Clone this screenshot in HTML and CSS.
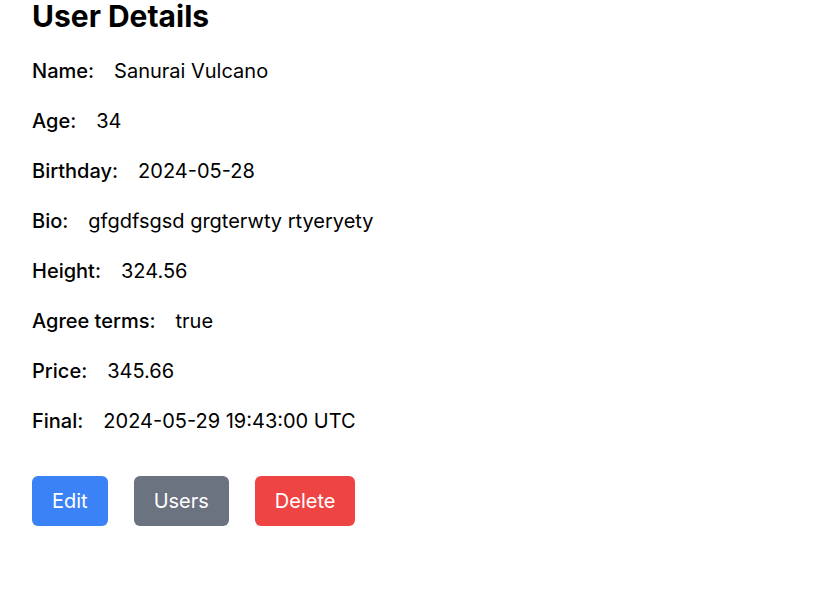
FILE: index.html
```html
<!DOCTYPE html>
<html>
<head>
<meta charset="utf-8">
<link rel="stylesheet" href="styles.css">
</head>
<body>
<div class="page">
  <h1 class="title">User Details</h1>
  <div class="rows">
    <div class="row"><span class="label">Name:</span><span class="value">Sanurai Vulcano</span></div>
    <div class="row"><span class="label">Age:</span><span class="value">34</span></div>
    <div class="row"><span class="label">Birthday:</span><span class="value">2024-05-28</span></div>
    <div class="row"><span class="label">Bio:</span><span class="value">gfgdfsgsd grgterwty rtyeryety</span></div>
    <div class="row"><span class="label">Height:</span><span class="value">324.56</span></div>
    <div class="row"><span class="label">Agree terms:</span><span class="value">true</span></div>
    <div class="row"><span class="label">Price:</span><span class="value">345.66</span></div>
    <div class="row"><span class="label">Final:</span><span class="value">2024-05-29 19:43:00 UTC</span></div>
  </div>
  <div class="actions">
    <button class="btn btn-blue">Edit</button>
    <button class="btn btn-gray">Users</button>
    <button class="btn btn-red">Delete</button>
  </div>
</div>
</body>
</html>
```
FILE: styles.css
```css
html, body {
  margin: 0;
  padding: 0;
  background: #ffffff;
}
body {
  font-family: Inter, "Noto Sans", sans-serif;
  color: #000000;
}
.page {
  padding: 0 32px;
}
.title {
  margin: 0;
  font-size: 30px;
  line-height: 32px;
  font-weight: 700;
}
.rows {
  display: flex;
  flex-direction: column;
  gap: 22px;
  margin-top: 25px;
}
.row {
  font-size: 20px;
  line-height: 28px;
  display: flex;
  gap: 20px;
}
.label {
  font-weight: 500;
}
.value {
  font-weight: 400;
}
.actions {
  display: flex;
  gap: 26px;
  margin-top: 41px;
}
.btn {
  font-family: Inter, "Noto Sans", sans-serif;
  font-size: 20px;
  line-height: 28px;
  font-weight: 400;
  color: #ffffff;
  border: none;
  border-radius: 6px;
  padding: 11px 20px;
  height: 50px;
  cursor: pointer;
}
.btn-blue { background: #3b82f6; }
.btn-gray { background: #6b7280; }
.btn-red { background: #ef4444; }
```
